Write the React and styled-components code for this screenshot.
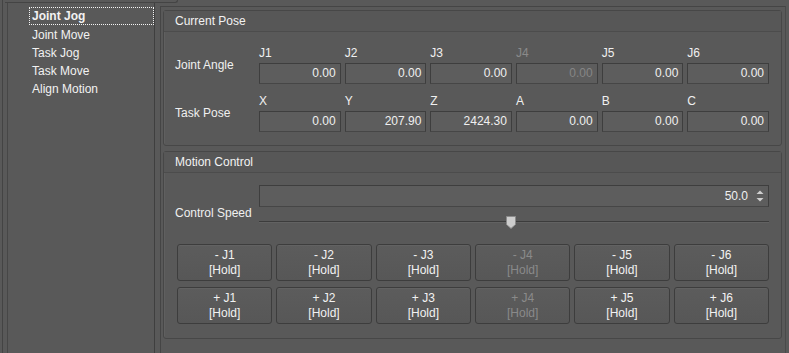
import React from "react";
import styled, { createGlobalStyle } from "styled-components";

const GlobalStyle = createGlobalStyle`
  html, body {
    margin: 0;
    padding: 0;
    background: #595959;
  }
  body {
    font-family: "Liberation Sans", Arial, sans-serif;
    font-size: 12px;
    color: #f0f0f0;
  }
`;

const Window = styled.div`
  display: flex;
  height: 353px;
  width: 789px;
  overflow: hidden;
  background: #595959;
`;

const Sidebar = styled.div`
  position: relative;
  display: flex;
  margin-left: 2px;
  padding-left: 4px;
  border-left: 1px solid #444;
  width: 150px;
`;

const TabEdge = styled.div`
  position: absolute;
  top: 0;
  left: 2px;
  width: 172px;
  height: 2px;
  border-bottom: 1px solid #444;
  border-right: 1px solid #444;
  border-bottom-right-radius: 3px;
`;

const ListBox = styled.div`
  margin-top: 3px;
  width: 146px;
  border-left: 1px solid #474747;
  border-right: 1px solid #3f3f3f;
  padding-top: 4px;
  display: flex;
  flex-direction: column;
`;

const ListItem = styled.div`
  height: 18px;
  line-height: 18px;
  margin-left: 21px;
  padding-left: 3px;
  box-sizing: border-box;
  color: #f2f2f2;
  font-weight: ${(p) => (p.$active ? 700 : 400)};
  outline: ${(p) => (p.$active ? "1px dotted #f4f4f4" : "none")};
  outline-offset: -1px;
  & + & {
    line-height: 20px;
  }
`;

const Main = styled.div`
  margin-left: 3px;
  margin-top: 6px;
  width: 626px;
  box-sizing: border-box;
  height: 360px;
  border: 1px solid #454545;
  border-right-color: #4a4a4a;
  padding: 3px 3px 0 2px;
  display: flex;
  flex-direction: column;
  gap: 5px;
`;

const Group = styled.section`
  border: 1px solid #474747;
  border-radius: 3px;
  box-shadow: inset 1px 1px 0 #606060;
`;

const GroupHeader = styled.div`
  height: 20px;
  line-height: 20px;
  padding-left: 11px;
  border-bottom: 1px solid #4c4c4c;
  background: #575757;
  color: #f2f2f2;
`;

const GroupBody = styled.div`
  padding: ${(p) => p.$pad};
  display: flex;
  flex-direction: column;
  gap: ${(p) => p.$gap || "0px"};
`;

const PoseRow = styled.div`
  display: flex;
  align-items: center;
`;

const RowLabel = styled.div`
  width: 84px;
  flex: none;
  color: #f0f0f0;
  padding-top: ${(p) => p.$offset || 0}px;
`;

const FieldGrid = styled.div`
  flex: 1;
  display: grid;
  grid-template-columns: repeat(6, 1fr);
  column-gap: 4px;
`;

const Cell = styled.div`
  display: flex;
  flex-direction: column;
  gap: 3px;
`;

const AxisName = styled.div`
  height: 14px;
  line-height: 14px;
  color: ${(p) => (p.$disabled ? "#8a8a8a" : "#f0f0f0")};
`;

const ValueBox = styled.div`
  height: 21px;
  box-sizing: border-box;
  border: 1px solid #3e3e3e;
  border-bottom-color: #464646;
  background: #5d5d5d;
  text-align: right;
  line-height: 19px;
  padding-right: 4px;
  color: ${(p) => (p.$disabled ? "#868686" : "#f0f0f0")};
`;

const SpeedRow = styled.div`
  display: flex;
  align-items: center;
`;

const SpeedStack = styled.div`
  flex: 1;
  display: flex;
  flex-direction: column;
  gap: 4px;
`;

const SpinBox = styled.div`
  position: relative;
  height: 22px;
  box-sizing: border-box;
  border: 1px solid #3e3e3e;
  border-bottom-color: #464646;
  background: #5d5d5d;
  text-align: right;
  line-height: 20px;
  padding-right: 20px;
`;

const SpinArrows = styled.svg`
  position: absolute;
  right: 4px;
  top: 4px;
`;

const Slider = styled.div`
  position: relative;
  height: 22px;
`;

const Groove = styled.div`
  position: absolute;
  left: 0;
  right: 0;
  top: 10px;
  height: 1px;
  background: #3c3c3c;
  border-bottom: 1px solid #626262;
`;

const Handle = styled.svg`
  position: absolute;
  top: 5px;
`;

const ButtonGrid = styled.div`
  display: grid;
  grid-template-columns: repeat(6, 1fr);
  gap: 6px 4px;
  margin-left: 2px;
`;

const JogButton = styled.button`
  height: 37px;
  border: 1px solid #3d3d3d;
  border-radius: 3px;
  background: linear-gradient(#5c5c5c, #575757);
  box-shadow: inset 0 1px 0 #626262;
  font-family: "Liberation Sans", Arial, sans-serif;
  font-size: 12px;
  line-height: 15px;
  padding: 0;
  color: ${(p) => (p.disabled ? "#8a8a8a" : "#f2f2f2")};
`;

const joints = ["J1", "J2", "J3", "J4", "J5", "J6"];
const taskAxes = ["X", "Y", "Z", "A", "B", "C"];
const jointValues = ["0.00", "0.00", "0.00", "0.00", "0.00", "0.00"];
const taskValues = ["0.00", "207.90", "2424.30", "0.00", "0.00", "0.00"];
const menu = ["Joint Jog", "Joint Move", "Task Jog", "Task Move", "Align Motion"];

const Pose = ({ label, names, values, disabled }) => (
  <PoseRow>
    <RowLabel>{label}</RowLabel>
    <FieldGrid>
      {names.map((n, i) => (
        <Cell key={n}>
          <AxisName $disabled={disabled === i}>{n}</AxisName>
          <ValueBox $disabled={disabled === i}>{values[i]}</ValueBox>
        </Cell>
      ))}
    </FieldGrid>
  </PoseRow>
);

export default function App() {
  const speed = 50;
  return (
    <>
      <GlobalStyle />
      <Window>
        <Sidebar>
          <TabEdge />
          <ListBox>
            {menu.map((m, i) => (
              <ListItem key={m} $active={i === 0}>
                {m}
              </ListItem>
            ))}
          </ListBox>
        </Sidebar>
        <Main>
          <Group>
            <GroupHeader>Current Pose</GroupHeader>
            <GroupBody $pad="14px 12px 13px 11px" $gap="10px">
              <Pose label="Joint Angle" names={joints} values={jointValues} disabled={3} />
              <Pose label="Task Pose" names={taskAxes} values={taskValues} />
            </GroupBody>
          </Group>
          <Group>
            <GroupHeader>Motion Control</GroupHeader>
            <GroupBody $pad="12px 12px 14px 11px" $gap="11px">
              <SpeedRow>
                <RowLabel $offset={8}>Control Speed</RowLabel>
                <SpeedStack>
                  <SpinBox>
                    50.0
                    <SpinArrows width="8" height="12" viewBox="0 0 8 12">
                      <path d="M4 0.5 L7.5 4 L0.5 4 Z" fill="#cfcfcf" />
                      <path d="M4 11.5 L7.5 8 L0.5 8 Z" fill="#cfcfcf" />
                    </SpinArrows>
                  </SpinBox>
                  <Slider>
                    <Groove />
                    <Handle
                      width="10"
                      height="13"
                      viewBox="0 0 10 13"
                      style={{ left: `calc(${speed}% - 8px)` }}
                    >
                      <path d="M0.5 0.5 H9.5 V8.5 L5 12.5 L0.5 8.5 Z" fill="#cdcdcd" stroke="#8a8a8a" />
                    </Handle>
                  </Slider>
                </SpeedStack>
              </SpeedRow>
              <ButtonGrid>
                {["-", "+"].map((sign) =>
                  joints.map((j) => (
                    <JogButton key={sign + j} disabled={j === "J4"}>
                      {sign} {j}
                      <br />
                      [Hold]
                    </JogButton>
                  ))
                )}
              </ButtonGrid>
            </GroupBody>
          </Group>
        </Main>
      </Window>
    </>
  );
}
